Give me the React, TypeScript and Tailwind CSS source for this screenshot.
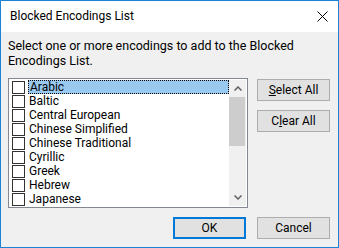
import React from "react";

const items = [
  "Arabic",
  "Baltic",
  "Central European",
  "Chinese Simplified",
  "Chinese Traditional",
  "Cyrillic",
  "Greek",
  "Hebrew",
  "Japanese",
];

function Btn({ children, primary }: { children: React.ReactNode; primary?: boolean }) {
  return (
    <button
      className={`flex h-[22px] w-[73px] items-center justify-center bg-[#e1e1e1] text-[12px] leading-[14px] text-black ${
        primary ? "border-2 border-[#0078d7]" : "border border-[#adadad]"
      }`}
    >
      {children}
    </button>
  );
}

export default function App() {
  return (
    <div
      className="flex h-[248px] w-[339px] flex-col border border-[#1883d7] bg-[#f0f0f0] text-black"
      style={{ fontFamily: 'Roboto, "Noto Sans", sans-serif' }}
    >
      <div className="flex h-[31px] shrink-0 items-center justify-between bg-white pl-[9px] pr-[10px]">
        <span className="text-[12px] leading-[15px]">Blocked Encodings List</span>
        <svg width="11" height="11" viewBox="0 0 11 11">
          <path d="M0.5 0.5 L10.5 10.5 M10.5 0.5 L0.5 10.5" stroke="#000" strokeWidth="1" />
        </svg>
      </div>

      <div className="flex flex-1 flex-col px-[7px] pt-[6px]">
        <p className="text-[12.5px] leading-[15px]">
          Select one or more encodings to add to the Blocked Encodings List.
        </p>

        <div className="mt-[10px] flex gap-[9px]">
          <div className="flex h-[130px] w-[240px] border border-[#828790] bg-white p-[1px]">
            <ul className="flex-1 pl-[2px]">
              {items.map((it, i) => (
                <li key={it} className="flex h-[14px] items-center">
                  <span className="h-[13px] w-[13px] shrink-0 border border-[#333333] bg-white" />
                  <span
                    className={`ml-[3px] flex h-[14px] flex-1 items-center pl-[1px] text-[12px] leading-[14px] ${
                      i === 0 ? "border border-dotted border-black bg-[#99c9ef]" : ""
                    }`}
                  >
                    {it}
                  </span>
                </li>
              ))}
            </ul>
            <div className="flex w-[17px] flex-col bg-[#f0f0f0]">
              <div className="flex h-[17px] items-center justify-center">
                <svg width="8" height="5" viewBox="0 0 8 5">
                  <path d="M0.5 4.5 L4 1 L7.5 4.5" stroke="#606060" strokeWidth="1.5" fill="none" />
                </svg>
              </div>
              <div className="mr-[1px] h-[49px] bg-[#cdcdcd]" />
              <div className="flex-1" />
              <div className="flex h-[17px] items-center justify-center">
                <svg width="8" height="5" viewBox="0 0 8 5">
                  <path d="M0.5 0.5 L4 4 L7.5 0.5" stroke="#606060" strokeWidth="1.5" fill="none" />
                </svg>
              </div>
            </div>
          </div>

          <div className="flex flex-col gap-[9px] pt-[1px]">
            <Btn>
              <span>
                <span className="underline">S</span>elect All
              </span>
            </Btn>
            <Btn>
              <span>
                C<span className="underline">l</span>ear All
              </span>
            </Btn>
          </div>
        </div>

        <div className="mt-[9px] flex justify-end gap-[11px] pr-[1px]">
          <Btn primary>OK</Btn>
          <Btn>Cancel</Btn>
        </div>
      </div>
    </div>
  );
}
